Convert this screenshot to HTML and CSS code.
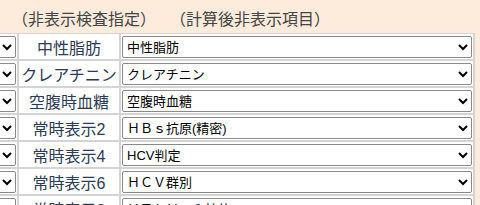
FILE: index.html
```html
<!DOCTYPE html>
<html lang="ja">
<head>
    <meta charset="UTF-8">
    <title>非表示設定</title>
    <link rel="stylesheet" href="styles.css">
</head>
<body>
<div class="wrap">
    <div class="head">
        <span class="hd1">（非表示検査指定）</span>
        <span class="hd2">（計算後非表示項目）</span>
    </div>
    <table class="list">
        <tr>
            <td class="sel"><select><option>表示</option></select></td>
            <td class="name">中性脂肪</td>
            <td class="item"><select><option>中性脂肪</option></select></td>
        </tr>
        <tr>
            <td class="sel"><select><option>表示</option></select></td>
            <td class="name">クレアチニン</td>
            <td class="item"><select><option>クレアチニン</option></select></td>
        </tr>
        <tr>
            <td class="sel"><select><option>表示</option></select></td>
            <td class="name">空腹時血糖</td>
            <td class="item"><select><option>空腹時血糖</option></select></td>
        </tr>
        <tr>
            <td class="sel"><select><option>表示</option></select></td>
            <td class="name">常時表示2</td>
            <td class="item"><select><option>ＨＢｓ抗原(精密)</option></select></td>
        </tr>
        <tr>
            <td class="sel"><select><option>表示</option></select></td>
            <td class="name">常時表示4</td>
            <td class="item"><select><option>HCV判定</option></select></td>
        </tr>
        <tr>
            <td class="sel"><select><option>表示</option></select></td>
            <td class="name">常時表示6</td>
            <td class="item"><select><option>ＨＣＶ群別</option></select></td>
        </tr>
        <tr>
            <td class="sel"><select><option>表示</option></select></td>
            <td class="name">常時表示8</td>
            <td class="item"><select><option>ＨＴＬＶ－１抗体</option></select></td>
        </tr>
    </table>
</div>
</body>
</html>
```

FILE: styles.css
```css
*{
    margin:0;
    padding:0;
}
html,body{
    background-color:#fdebdc;
    overflow:hidden;
}
body{
    font-family:"Liberation Sans","Noto Sans CJK JP",sans-serif;
    color:#333;
}
.wrap{
    width:480px;
    height:205px;
    overflow:hidden;
}
.head{
    display:flex;
    height:33px;
    padding-left:12px;
    font-size:16px;
    line-height:24px;
    padding-top:8px;
    box-sizing:border-box;
    color:#444;
}
.head .hd2{
    margin-left:14px;
}
.list{
    margin-left:-46px;
    border-collapse:separate;
    border-spacing:0;
    border-top:1px solid #d4d4d4;
    background-color:#fff;
}
.list td{
    padding:2px 1px 1px;
    border-right:2px solid #d4d4d4;
    border-bottom:2px solid #d4d4d4;
    vertical-align:middle;
}
.list td.sel{
    padding-left:2px;
}
.list td.name{
    width:100px;
    padding:0;
    font-size:16px;
    color:#2c3a55;
    text-align:center;
    white-space:nowrap;
}
.list select{
    display:block;
    height:22px;
    font-family:"Liberation Sans","Noto Sans CJK JP",sans-serif;
    font-size:13px;
    color:#000;
    background-color:#fff;
    border:1px solid #8a8a8a;
    border-radius:2px;
}
.list td.sel select{
    width:60px;
}
.list td.item select{
    width:350px;
}
```
